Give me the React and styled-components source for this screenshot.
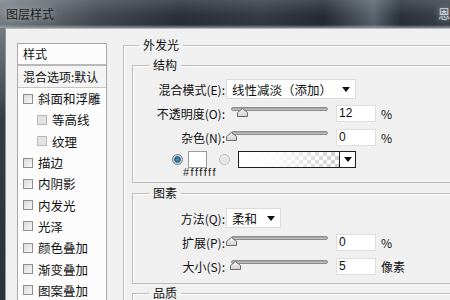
import React from 'react';
import styled, { createGlobalStyle } from 'styled-components';

const GlobalStyle = createGlobalStyle`
  html, body {
    margin: 0;
    padding: 0;
  }
  body {
    width: 450px;
    height: 300px;
    overflow: hidden;
    font-family: "Noto Sans CJK SC", "Noto Sans", sans-serif;
    color: #111;
  }
`;

const STYLE_ITEMS = [
  { name: '斜面和浮雕' },
  { name: '等高线', sub: true },
  { name: '纹理', sub: true },
  { name: '描边' },
  { name: '内阴影' },
  { name: '内发光' },
  { name: '光泽' },
  { name: '颜色叠加' },
  { name: '渐变叠加' },
  { name: '图案叠加' },
];

const TRACK = 97;

const Thumb = ({ value }) => (
  <ThumbWrap style={{ left: 5 + (value / 100) * TRACK - 5.5 + 'px' }}>
    <svg width="11" height="9" viewBox="0 0 11 9">
      <defs>
        <linearGradient id="th" x1="0" y1="0" x2="0" y2="1">
          <stop offset="0" stopColor="#fafafa" />
          <stop offset="1" stopColor="#cfcfcf" />
        </linearGradient>
      </defs>
      <path d="M5.5 0.5 L10.5 4.5 V8.5 H0.5 V4.5 Z" fill="url(#th)" stroke="#6a6a6a" />
    </svg>
  </ThumbWrap>
);

const SliderField = ({ label, value, unit }) => (
  <Row $h={24}>
    <Label>{label}</Label>
    <Slider>
      <Track />
      <Thumb value={value} />
    </Slider>
    <NumInput>{value}</NumInput>
    <Unit>{unit}</Unit>
  </Row>
);

const App = () => {
  return (
    <Window>
      <GlobalStyle />
      <TitleBar>
        <Title>图层样式</Title>
        <Title $side>恩</Title>
      </TitleBar>
      <Body>
        <StyleList>
          <ListHeader>样式</ListHeader>
          <BlendRow>混合选项:默认</BlendRow>
          {STYLE_ITEMS.map((item) => (
            <StyleItem key={item.name} $sub={item.sub}>
              <Check $sub={item.sub} />
              {item.name}
            </StyleItem>
          ))}
        </StyleList>

        <Panel>
          <Group $outer>
            <Legend $indent={7}>外发光</Legend>
            <Group $top={4} $pad="4px 0 4px 0">
              <Legend $indent={16}>结构</Legend>
              <Row $h={24}>
                <Label>混合模式(E):</Label>
                <Select $w={130}>
                  线性减淡（添加）
                  <Arrow />
                </Select>
              </Row>
              <SliderField label="不透明度(O):" value={12} unit="%" />
              <SliderField label="杂色(N):" value={0} unit="%" />
              <Row $h={20} $indent={39}>
                <Radio $on />
                <Swatch />
                <Radio />
                <GradientBox />
                <DropButton>
                  <Arrow />
                </DropButton>
              </Row>
              <Hex>#ffffff</Hex>
            </Group>

            <Group $top={2} $pad="5px 0 5px 0">
              <Legend $indent={16}>图素</Legend>
              <Row $h={24}>
                <Label>方法(Q):</Label>
                <Select $w={55}>
                  柔和
                  <Arrow />
                </Select>
              </Row>
              <SliderField label="扩展(P):" value={0} unit="%" />
              <SliderField label="大小(S):" value={5} unit="像素" />
            </Group>

            <Group $top={1} $pad="0" $tall>
              <Legend $indent={16}>品质</Legend>
            </Group>
          </Group>
        </Panel>
      </Body>
    </Window>
  );
};

const Window = styled.div`
  width: 450px;
  height: 300px;
  display: flex;
  flex-direction: column;
  overflow: hidden;
  background: linear-gradient(180deg, #868c93 0%, #5e656d 20%, #333b45 40%, #29313b 100%);
`;

const TitleBar = styled.div`
  height: 28px;
  flex-shrink: 0;
  display: flex;
  align-items: center;
  justify-content: space-between;
  padding-left: 6px;
  box-sizing: border-box;
  background:
    linear-gradient(180deg, rgba(255, 255, 255, 0.14) 0%, rgba(255, 255, 255, 0) 55%, rgba(0, 0, 0, 0.08) 88%, rgba(170, 176, 182, 0.7) 100%),
    linear-gradient(90deg, #7c838a 0%, #646b73 10%, #434a52 22%, #2a313a 40%, #343c45 58%, #252c35 72%, #5b6670 83%, #2a323b 89%, #3b434c 100%);
`;

const Title = styled.span`
  font-size: 12px;
  line-height: 16px;
  text-shadow: 0 0 6px rgba(235, 240, 245, 0.7);
  color: ${(p) => (p.$side ? '#d8dce0' : '#1a1a1a')};
`;

const Body = styled.div`
  flex: 1;
  display: flex;
  align-items: stretch;
  margin-left: 5px;
  background: #f0f0f0;
  border-top: 1px solid #b4b9be;
  border-left: 1px solid #8d949b;
  overflow: hidden;
`;

const StyleList = styled.div`
  width: 90px;
  flex-shrink: 0;
  margin: 14px 0 0 11px;
  box-sizing: border-box;
  background: #fcfcfc;
  border: 1px solid #a9a9a9;
  border-bottom: none;
  font-size: 12.5px;
`;

const ListHeader = styled.div`
  height: 20px;
  line-height: 20px;
  padding-left: 5px;
  border-bottom: 2px solid #b9b9b9;
  font-size: 12px;
`;

const BlendRow = styled.div`
  height: 21px;
  line-height: 21px;
  padding-left: 5px;
  background: #f4f4f4;
  border-bottom: 1px solid #c4c4c4;
  font-size: 12px;
  white-space: nowrap;
`;

const StyleItem = styled.div`
  height: 21.3px;
  display: flex;
  align-items: center;
  gap: 5px;
  padding-left: ${(p) => (p.$sub ? '19px' : '5px')};
  white-space: nowrap;
`;

const Check = styled.span`
  width: 10px;
  height: 10px;
  box-sizing: border-box;
  flex-shrink: 0;
  border: 1px solid ${(p) => (p.$sub ? '#b9b9b9' : '#8e8e8e')};
  background: ${(p) =>
    p.$sub ? '#e2e2e2' : 'linear-gradient(135deg, #d9d9d9, #f9f9f9)'};
`;

const Panel = styled.div`
  width: 340px;
  flex-shrink: 0;
  margin: 8px 0 0 16px;
`;

const Group = styled.fieldset`
  margin: ${(p) => (p.$top || 0) + 'px'} 0 0 0;
  padding: ${(p) => (p.$outer ? '0 0 0 8px' : p.$pad)};
  min-height: ${(p) => (p.$outer ? '300px' : p.$tall ? '30px' : '0')};
  border: 1px solid #bcbcbc;
  border-right: none;
  border-bottom: ${(p) => (p.$outer || p.$tall ? 'none' : '1px solid #bcbcbc')};
  box-shadow: inset 1px 1px 0 #fff;
  min-width: 0;
`;

const Legend = styled.legend`
  margin-left: ${(p) => p.$indent}px;
  padding: 0 4px;
  font-size: 12px;
  line-height: 16px;
  color: #111;
`;

const Row = styled.div`
  height: ${(p) => p.$h}px;
  display: flex;
  align-items: center;
  padding-left: ${(p) => (p.$indent || 0) + 'px'};
  font-size: 12px;
`;

const Label = styled.span`
  width: 92px;
  flex-shrink: 0;
  text-align: right;
  white-space: nowrap;
  margin-right: 1px;
`;

const Select = styled.div`
  width: ${(p) => p.$w}px;
  height: 20px;
  box-sizing: border-box;
  display: flex;
  align-items: center;
  justify-content: space-between;
  padding: 0 5px 0 5px;
  background: #fff;
  border: 1px solid #dcdcdc;
  font-size: 12.5px;
  white-space: nowrap;
`;

const Arrow = styled.span`
  width: 0;
  height: 0;
  border-left: 4px solid transparent;
  border-right: 4px solid transparent;
  border-top: 5px solid #111;
`;

const Slider = styled.div`
  position: relative;
  width: 102px;
  height: 10px;
  flex-shrink: 0;
  align-self: center;
  margin-top: -2px;
`;

const Track = styled.div`
  margin-left: 5px;
  width: ${TRACK}px;
  height: 4px;
  box-sizing: border-box;
  border: 1px solid #8c8c8c;
  border-radius: 2px;
  background: linear-gradient(180deg, #9c9c9c, #c9c9c9);
`;

const ThumbWrap = styled.div`
  position: absolute;
  top: 1px;
  width: 11px;
  height: 9px;
  line-height: 0;
`;

const NumInput = styled.div`
  width: 40px;
  height: 17px;
  box-sizing: border-box;
  margin-left: 8px;
  padding-left: 2px;
  display: flex;
  align-items: center;
  background: #fff;
  border: 1px solid #dedede;
  font-family: "Liberation Sans", Arial, sans-serif;
  font-size: 12px;
`;

const Unit = styled.span`
  margin-left: 5px;
  font-size: 12px;
  white-space: nowrap;
`;

const Radio = styled.span`
  width: 11px;
  height: 11px;
  border-radius: 50%;
  box-sizing: border-box;
  flex-shrink: 0;
  border: 1px solid ${(p) => (p.$on ? '#6f7c88' : '#b3b7bb')};
  background: ${(p) =>
    p.$on
      ? 'radial-gradient(circle, #3c86b8 0 22%, #1d4d70 42%, #c9d0d6 58%, #f4f4f4 100%)'
      : 'radial-gradient(circle, #e4e4e4 0 40%, #fafafa 100%)'};
  margin-right: ${(p) => (p.$on ? '5px' : '8px')};
`;

const Swatch = styled.span`
  width: 19px;
  height: 17px;
  box-sizing: border-box;
  background: #fff;
  border: 1px solid #9a9a9a;
  margin-right: 12px;
`;

const GradientBox = styled.span`
  width: 102px;
  height: 17px;
  box-sizing: border-box;
  border: 1px solid #1e1e1e;
  background:
    linear-gradient(90deg, #fff 0%, rgba(255, 255, 255, 0.9) 35%, rgba(255, 255, 255, 0) 100%),
    repeating-conic-gradient(#cfcfcf 0 25%, #fff 0 50%) 0 0 / 8px 8px;
`;

const DropButton = styled.span`
  width: 16px;
  height: 17px;
  box-sizing: border-box;
  display: flex;
  align-items: center;
  justify-content: center;
  background: #fff;
  border: 1px solid #1e1e1e;
  border-left: none;
`;

const Hex = styled.div`
  height: 12px;
  line-height: 12px;
  margin-top: -3px;
  padding-left: 50px;
  font-family: "Liberation Sans", Arial, sans-serif;
  font-size: 11px;
  letter-spacing: 1.5px;
  color: #222;
`;

export default App;
